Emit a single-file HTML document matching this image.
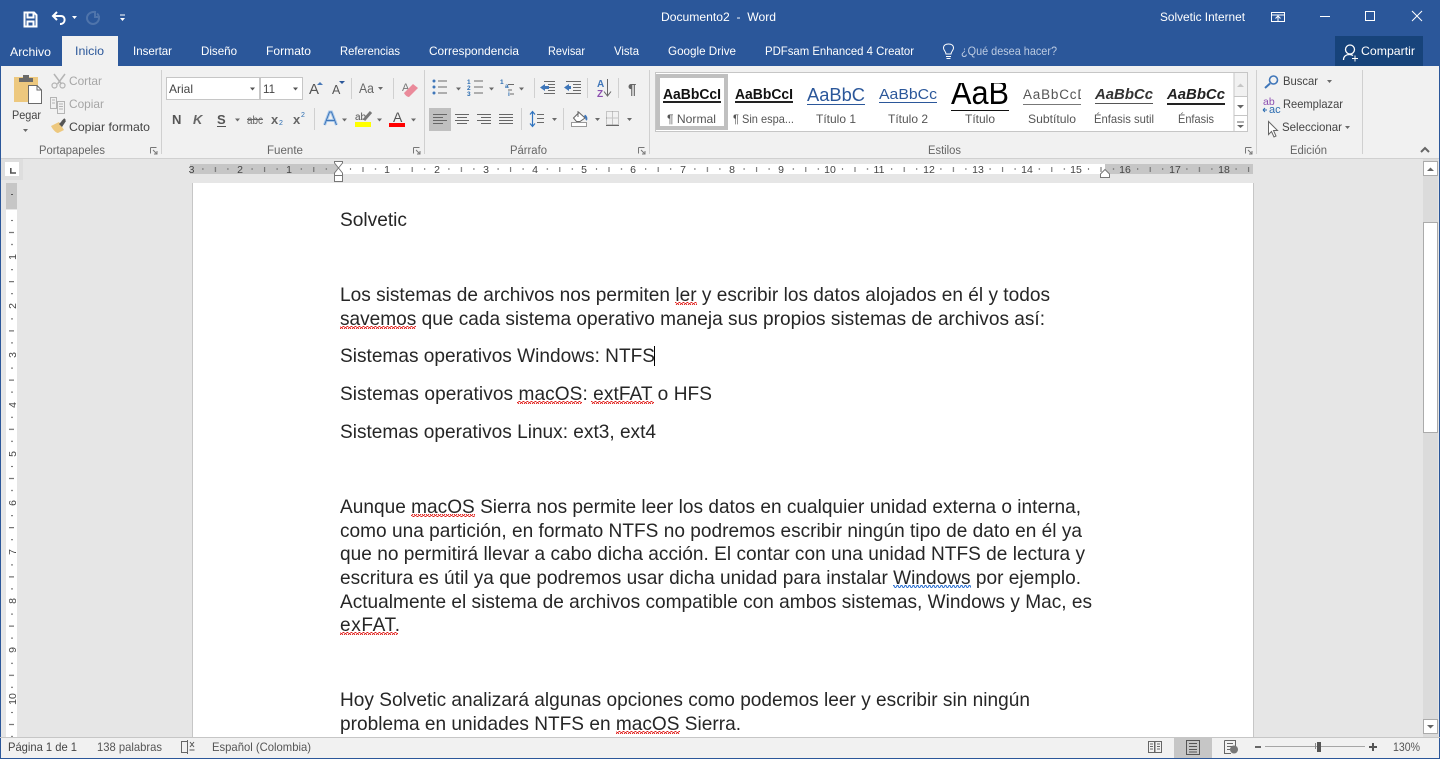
<!DOCTYPE html>
<html lang="es"><head><meta charset="utf-8"><title>Documento2 - Word</title>
<style>
html,body{margin:0;padding:0;width:1440px;height:759px;overflow:hidden;background:#e6e6e6}
svg{display:block}
text{font-family:"Liberation Sans",sans-serif;white-space:pre}
.t{font-size:12px;fill:#fff}
.r{font-size:12px;fill:#444}
.d{font-size:12px;fill:#a6a6a6}
.g{font-size:11.5px;fill:#666}
.s{font-size:12px;fill:#555}
.doc{font-size:19.07px;fill:#262626}
.rn{font-size:10.5px;fill:#444}
.i{fill:none;stroke:#5f5f5f;stroke-width:1}
.l{fill:none;stroke:#6a6a6a;stroke-width:1}
.a{fill:#6a6a6a}
</style></head><body>
<svg width="1440" height="759" viewBox="0 0 1440 759" xmlns="http://www.w3.org/2000/svg">
<defs>
<pattern id="hr" x="338" y="164" width="49.2" height="10" patternUnits="userSpaceOnUse">
<rect x="12" y="4" width="1" height="2" fill="#777"/><rect x="24.5" y="3" width="1" height="5" fill="#666"/><rect x="37" y="4" width="1" height="2" fill="#777"/>
</pattern>
<pattern id="vr" x="6" y="208" width="11" height="49.2" patternUnits="userSpaceOnUse">
<rect x="5" y="12" width="2" height="1" fill="#666"/><rect x="3" y="24" width="5" height="1" fill="#555"/><rect x="5" y="36" width="2" height="1" fill="#666"/>
</pattern>
<pattern id="wr" width="4" height="3" patternUnits="userSpaceOnUse"><path d="M0 2.5L1 .5 2 .5 3 2.5 4 2.5" fill="none" stroke="#e0201c" stroke-width="1"/></pattern>
<pattern id="wb" width="4" height="3" patternUnits="userSpaceOnUse"><path d="M0 2.5L1 .5 2 .5 3 2.5 4 2.5" fill="none" stroke="#2a6fd0" stroke-width="1"/></pattern>
<clipPath id="tc"><rect x="945" y="83" width="70" height="26"/></clipPath>
<clipPath id="sc"><rect x="1023" y="84" width="58" height="24"/></clipPath>
</defs>

<!-- base -->
<rect width="1440" height="759" fill="#e6e6e6"/>
<rect width="1440" height="66" fill="#2b579a"/>
<rect y="66" width="1440" height="92" fill="#f1f1f1"/>
<rect y="158" width="1440" height="1" fill="#d0d0d0"/>
<rect x="1" y="159" width="22" height="21" fill="#dedede"/>
<rect x="62" y="36" width="56" height="30" fill="#f1f1f1"/>
<rect x="1335" y="36" width="88" height="30" fill="#17437a"/>
<rect x="0" y="66" width="1" height="693" fill="#2b579a"/>
<rect x="1439" y="66" width="1" height="693" fill="#2b579a"/>

<!-- title bar icons -->
<path d="M24.500 12.500H34L36.500 15V26.500H24.500Z M27.500 12.500V17.500H33.500V12.500 M27.500 26.500V21.500H33.500V26.500" fill="none" stroke="#fff" stroke-width="2"/>
<path d="M57 12L53 16 57 20" fill="none" stroke="#fff" stroke-width="2"/><path d="M53 16H61C66 16 66 24 60 24" fill="none" stroke="#fff" stroke-width="2"/>
<path d="M72 16h5l-2.500 3z" fill="#fff"/>
<path d="M96 12C90 11 87 15 87 18c0 3.500 3 6 6 6s6-2.500 6-6c0-2-.8-3.500-2-4.500M95 11v6h5" fill="none" stroke="#4f74ab" stroke-width="2"/>
<path d="M120 15h5" fill="none" stroke="#fff" stroke-width="1"/><path d="M120 18h5l-2.500 3z" fill="#fff"/>
<text class="t" x="661" y="21" textLength="115" lengthAdjust="spacingAndGlyphs">Documento2  -  Word</text>
<text class="t" x="1160" y="21" textLength="85" lengthAdjust="spacingAndGlyphs">Solvetic Internet</text>
<path d="M1271.500 12.500H1284.500V21.500H1271.500ZM1271.500 15H1284.500M1278 21V16.500M1275.500 18.500L1278 16 1280.500 18.500" fill="none" stroke="#fff"/>
<rect x="1320" y="16" width="10" height="1" fill="#fff"/>
<rect x="1365.500" y="11.500" width="9" height="9" fill="none" stroke="#fff"/>
<path d="M1412 11L1422 21M1422 11L1412 21" stroke="#fff" fill="none"/>

<!-- tabs -->
<text class="t" x="10" y="56" textLength="41" lengthAdjust="spacingAndGlyphs">Archivo</text>
<text class="t" x="75" y="55" textLength="29" lengthAdjust="spacingAndGlyphs" style="fill:#2b579a">Inicio</text>
<text class="t" x="133" y="55" textLength="39" lengthAdjust="spacingAndGlyphs">Insertar</text>
<text class="t" x="201" y="55" textLength="36" lengthAdjust="spacingAndGlyphs">Diseño</text>
<text class="t" x="266" y="55" textLength="45" lengthAdjust="spacingAndGlyphs">Formato</text>
<text class="t" x="340" y="55" textLength="60" lengthAdjust="spacingAndGlyphs">Referencias</text>
<text class="t" x="429" y="55" textLength="90" lengthAdjust="spacingAndGlyphs">Correspondencia</text>
<text class="t" x="548" y="55" textLength="37" lengthAdjust="spacingAndGlyphs">Revisar</text>
<text class="t" x="614" y="55" textLength="25" lengthAdjust="spacingAndGlyphs">Vista</text>
<text class="t" x="668" y="55" textLength="68" lengthAdjust="spacingAndGlyphs">Google Drive</text>
<text class="t" x="765" y="55" textLength="149" lengthAdjust="spacingAndGlyphs">PDFsam Enhanced 4 Creator</text>
<path d="M946 56.500h5M946.500 58.500h4M946 54C946 51.500 943.500 50.500 943.500 48C943.500 45.500 945.500 44 948.500 44C951.500 44 953.500 45.500 953.500 48C953.500 50.500 951 51.500 951 54Z" fill="none" stroke="#fff" stroke-width="1"/>
<text class="t" x="961" y="55" textLength="96" lengthAdjust="spacingAndGlyphs" style="fill:#bccbe2">¿Qué desea hacer?</text>
<circle cx="1350" cy="49.500" r="4.500" fill="none" stroke="#fff" stroke-width="1.300"/>
<path d="M1343.500 60C1343.500 56 1346.500 54.500 1349.500 54.500C1351 54.500 1352 54.800 1353 55.500" fill="none" stroke="#fff" stroke-width="1.300"/>
<path d="M1352 58.500h6M1355 55.500v6" stroke="#fff"/>
<text class="t" x="1361" y="55" textLength="54" lengthAdjust="spacingAndGlyphs">Compartir</text>

<!-- separators -->
<g fill="#d0d0d0">
<rect x="161" y="70" width="1" height="84"/><rect x="424" y="70" width="1" height="84"/><rect x="649" y="70" width="1" height="84"/><rect x="1256" y="70" width="1" height="84"/><rect x="1362" y="70" width="1" height="84"/>
<rect x="351" y="78" width="1" height="21"/><rect x="393" y="78" width="1" height="21"/><rect x="314" y="108" width="1" height="22"/>
<rect x="534" y="78" width="1" height="20"/><rect x="587" y="78" width="1" height="20"/><rect x="618" y="78" width="1" height="20"/>
<rect x="521" y="108" width="1" height="22"/><rect x="563" y="108" width="1" height="22"/>
</g>

<!-- clipboard -->
<rect x="14" y="77" width="24" height="25" fill="#edc87e"/>
<path d="M19 82V78H23V75H29V78H33V82Z" fill="#6a6a6a"/>
<path d="M28.500 85.500H37L41.500 90V103.500H28.500Z" fill="#fff" stroke="#6a6a6a"/><path d="M37 85.500V90H41.500" fill="none" stroke="#6a6a6a"/>
<text class="r" x="12" y="119" textLength="29" lengthAdjust="spacingAndGlyphs">Pegar</text>
<path d="M23 129h5l-2.500 3z" class="a"/>
<path d="M54 74L61.500 84M65 74L57.500 84" stroke="#b4b4b4" stroke-width="1.500" fill="none"/>
<circle cx="54.500" cy="85.500" r="2.500" fill="none" stroke="#b4b4b4" stroke-width="1.200"/><circle cx="62.500" cy="85.500" r="2.500" fill="none" stroke="#b4b4b4" stroke-width="1.200"/>
<text class="d" x="69" y="85" textLength="33" lengthAdjust="spacingAndGlyphs">Cortar</text>
<path d="M50.500 97.500H56.500V108.500H50.500ZM57.500 101.500H64.500V113.500H57.500ZM59 104h4M59 106.500h4M59 109h4M52 100h3M52 103h3" fill="none" stroke="#b4b4b4"/>
<text class="d" x="69" y="108" textLength="35" lengthAdjust="spacingAndGlyphs">Copiar</text>
<path d="M51 126L59 122 64 130 58 133C56 133 53 130 51 126Z" fill="#edc87e"/>
<path d="M59 124L64 119 66 121 62 127Z" fill="#555"/><path d="M62 122L65 119" stroke="#555" stroke-width="2"/>
<text class="r" x="69" y="131" textLength="81" lengthAdjust="spacingAndGlyphs">Copiar formato</text>
<text class="g" x="39" y="154" textLength="66" lengthAdjust="spacingAndGlyphs">Portapapeles</text>
<path id="dl" d="M150.500 147.500H156.500M150.500 147.500V153.500M153 150L157 154M157 151V154H154" fill="none" stroke="#777"/>

<!-- font -->
<rect x="166.500" y="77.500" width="93" height="22" fill="#fff" stroke="#c6c6c6"/>
<rect x="260.500" y="77.500" width="42" height="22" fill="#fff" stroke="#c6c6c6"/>
<text class="r" x="169" y="93" textLength="24" lengthAdjust="spacingAndGlyphs">Arial</text>
<text class="r" x="263" y="93" textLength="12" lengthAdjust="spacingAndGlyphs">11</text>
<path d="M250 87.500h5l-2.500 3zM293 87.500h5l-2.500 3z" fill="#555"/>
<text x="309" y="94" style="font-size:15px;fill:#555">A</text><path d="M317 85h6l-3-3z" fill="#4a7ab8"/>
<text x="332" y="94" style="font-size:12.500px;fill:#555">A</text><path d="M339 81h6l-3 3z" fill="#2b579a"/>
<text x="359" y="93" textLength="15" lengthAdjust="spacingAndGlyphs" style="font-size:14px;fill:#666">Aa</text>
<path d="M378 87h5l-2.500 3z" class="a"/>
<text x="402" y="91" style="font-size:11px;fill:#777">A</text>
<path d="M404 93L413 84 418 88 409 97C407 97 405 95 404 93Z" fill="#ea8a9a"/>
<text x="172" y="124" style="font-size:13px;font-weight:bold;fill:#555">N</text>
<text x="193" y="124" style="font-size:13px;font-weight:bold;font-style:italic;fill:#666">K</text>
<text x="217" y="124" style="font-size:13px;font-weight:bold;fill:#555">S</text><rect x="217" y="126" width="9" height="1" fill="#555"/>
<path d="M235 118.500h5l-2.500 3z" class="a"/>
<text x="247" y="124" textLength="16" lengthAdjust="spacingAndGlyphs" style="font-size:12px;fill:#666">abc</text><rect x="247" y="119" width="16" height="1" fill="#666"/>
<text x="271" y="124" style="font-size:13px;font-weight:bold;fill:#666">x</text><text x="279" y="125" style="font-size:7px;fill:#2b6cb0">2</text>
<text x="293" y="124" style="font-size:13px;font-weight:bold;fill:#666">x</text><text x="301" y="117" style="font-size:7px;fill:#2b6cb0">2</text>
<path d="M324.500 125L329.500 112H331.500L336.500 125M326.500 120.500H334.500" fill="none" stroke="#a9c8ea" stroke-width="3"/>
<path d="M324.500 125L329.500 112H331.500L336.500 125M326.500 120.500H334.500" fill="none" stroke="#3f76b9" stroke-width="1"/>
<path d="M342 118.500h5l-2.500 3z" class="a"/>
<text x="355" y="120" style="font-size:10px;fill:#555">ab</text>
<path d="M364 120L371 112" stroke="#777" stroke-width="3"/>
<rect x="355" y="122" width="16" height="5" fill="#ffff00"/>
<path d="M377 118.500h5l-2.500 3z" class="a"/>
<text x="393" y="122" style="font-size:14px;fill:#555">A</text>
<rect x="389" y="123" width="16" height="4" fill="#ff0000"/>
<path d="M411 118.500h5l-2.500 3z" class="a"/>
<text class="g" x="267" y="154" textLength="36" lengthAdjust="spacingAndGlyphs">Fuente</text>
<use href="#dl" x="263"/>

<!-- paragraph -->
<rect x="429" y="108" width="22" height="23" fill="#c0c0c0"/>
<g fill="#3f76b9">
<circle cx="434" cy="81" r="1.500"/><circle cx="434" cy="87" r="1.500"/><circle cx="434" cy="93" r="1.500"/>
</g>
<path d="M438 81h9M438 87h9M438 93h9M474 81h9M474 87h9M474 93h9M508 84.500h6M508 90h4M510 94h4" class="l"/>
<path d="M456 87.500h5l-2.500 3zM489 87.500h5l-2.500 3zM519 87.500h5l-2.500 3z" class="a"/>
<text x="467" y="84" style="font-size:6.500px;fill:#2b6cb0;font-weight:bold">1</text><text x="467" y="90" style="font-size:6.500px;fill:#2b6cb0;font-weight:bold">2</text><text x="467" y="96" style="font-size:6.500px;fill:#2b6cb0;font-weight:bold">3</text>
<text x="500" y="84" style="font-size:6.500px;fill:#2b6cb0;font-weight:bold">1</text><text x="505" y="88" style="font-size:6.500px;fill:#2b6cb0;font-weight:bold">a</text><text x="508" y="96" style="font-size:6.500px;fill:#2b6cb0;font-weight:bold">i</text>
<path d="M544 81.500h11M548 84.500h7M548 87.500h7M548 90.500h7M544 93.500h11M566 81.500h15M573 84.500h8M573 87.500h8M573 90.500h8M566 93.500h15" class="l"/>
<path d="M540 87.500L545 84V86H549V89H545V91Z" fill="#3f76b9"/>
<path d="M571 87.500L566 84V86H564V89H566V91Z" transform="matrix(-1 0 0 1 1135 0)" fill="#3f76b9"/>
<text x="597" y="87" style="font-size:10px;font-weight:bold;fill:#3f76b9">A</text><text x="597" y="97" style="font-size:10px;font-weight:bold;fill:#8c4fb0">Z</text>
<path d="M607.500 79V95M604 91.500L607.500 96 611 91.500" fill="none" stroke="#666"/>
<text x="628" y="94" style="font-size:15px;font-weight:bold;fill:#666">¶</text>
<path d="M433 114.500h14M433 117.500h10M433 120.500h14M433 123.500h10M455 114.500h14M457 117.500h10M455 120.500h14M457 123.500h10M477 114.500h14M481 117.500h10M477 120.500h14M481 123.500h10M499 114.500h14M499 117.500h14M499 120.500h14M499 123.500h14" fill="none" stroke="#666"/>
<path d="M532.500 112V126M530 114.500L532.500 111.500 535 114.500M530 123.500L532.500 126.500 535 123.500" fill="none" stroke="#2f73bf" stroke-width="1.200"/>
<path d="M537 114.500h7M537 118.500h7M537 122.500h7" class="l"/>
<path d="M552 118h5l-2.500 3zM595 118h5l-2.500 3zM627 118h5l-2.500 3z" class="a"/>
<path d="M573.500 118L579 112.500 585 118 580 121.500H576.500Z" fill="#fff" stroke="#666"/><path d="M578 111V117" stroke="#666" fill="none"/><path d="M584.500 115.500C587 117 586.500 119.500 586 120" stroke="#3f76b9" stroke-width="2" fill="none"/>
<rect x="571.500" y="122.500" width="15" height="4" fill="#fff" stroke="#999"/>
<path d="M606.500 111.500H618.500V124.500H606.500ZM606.500 118H618.500M612.500 111.500V124.500" fill="none" stroke="#999" stroke-dasharray="1 1"/>
<rect x="606" y="125" width="13" height="1" fill="#666"/>
<text class="g" x="510" y="154" textLength="37" lengthAdjust="spacingAndGlyphs">Párrafo</text>
<use href="#dl" x="488"/>

<!-- styles -->
<rect x="655.500" y="72.500" width="592" height="59" fill="#fff" stroke="#c6c6c6"/>
<rect x="658" y="76" width="68" height="52" fill="#fff" stroke="#c0c0c0" stroke-width="4"/>
<text x="663" y="99" textLength="58" lengthAdjust="spacingAndGlyphs" style="font-size:14.500px;font-weight:bold;fill:#111">AaBbCcI</text><rect x="663" y="101" width="58" height="2" fill="#222"/>
<text x="735" y="99" textLength="58" lengthAdjust="spacingAndGlyphs" style="font-size:14.500px;font-weight:bold;fill:#111">AaBbCcI</text><rect x="735" y="101" width="58" height="2" fill="#222"/>
<text x="807" y="101" textLength="58" lengthAdjust="spacingAndGlyphs" style="font-size:18.500px;fill:#2b579a">AaBbC</text><rect x="807" y="104" width="58" height="1" fill="#2b579a"/>
<text x="879" y="99" textLength="58" lengthAdjust="spacingAndGlyphs" style="font-size:14.500px;fill:#2b579a">AaBbCc</text><rect x="879" y="102" width="58" height="1" fill="#2b579a"/>
<g clip-path="url(#tc)"><text x="951" y="104" textLength="58" lengthAdjust="spacingAndGlyphs" style="font-size:33px;fill:#000">AaB</text></g><rect x="951" y="110" width="58" height="1" fill="#111"/>
<g clip-path="url(#sc)"><text x="1023" y="99" style="font-size:13.500px;letter-spacing:.8px;fill:#555">AaBbCcD</text></g><rect x="1023" y="104" width="58" height="1" fill="#777"/>
<text x="1095" y="99" textLength="58" lengthAdjust="spacingAndGlyphs" style="font-size:14.500px;font-weight:bold;font-style:italic;fill:#333">AaBbCc</text><rect x="1095" y="103" width="58" height="1" fill="#555"/>
<text x="1167" y="99" textLength="58" lengthAdjust="spacingAndGlyphs" style="font-size:14.500px;font-weight:bold;font-style:italic;fill:#222">AaBbCc</text><rect x="1167" y="103" width="58" height="2" fill="#222"/>
<text class="s" x="667" y="123" textLength="49" lengthAdjust="spacingAndGlyphs">¶ Normal</text>
<text class="s" x="733" y="123" textLength="61" lengthAdjust="spacingAndGlyphs">¶ Sin espa...</text>
<text class="s" x="816" y="123" textLength="40" lengthAdjust="spacingAndGlyphs">Título 1</text>
<text class="s" x="888" y="123" textLength="40" lengthAdjust="spacingAndGlyphs">Título 2</text>
<text class="s" x="965" y="123" textLength="30" lengthAdjust="spacingAndGlyphs">Título</text>
<text class="s" x="1028" y="123" textLength="48" lengthAdjust="spacingAndGlyphs">Subtítulo</text>
<text class="s" x="1094" y="123" textLength="60" lengthAdjust="spacingAndGlyphs">Énfasis sutil</text>
<text class="s" x="1178" y="123" textLength="36" lengthAdjust="spacingAndGlyphs">Énfasis</text>
<rect x="1234" y="73" width="13" height="23" fill="#f1f1f1"/>
<path d="M1234 72.500V131M1234 96.500H1248M1234 115.500H1248" stroke="#c6c6c6" fill="none"/>
<path d="M1237 87h7l-3.500-3.500z" fill="#c6c6c6"/><path d="M1237 105h7l-3.500 3.500z" fill="#666"/>
<path d="M1237 122h7" stroke="#666"/><path d="M1237 125h7l-3.500 3z" fill="#666"/>
<text class="g" x="928" y="154" textLength="33" lengthAdjust="spacingAndGlyphs">Estilos</text>
<use href="#dl" x="1095"/>

<!-- editing -->
<circle cx="1273.500" cy="80" r="4" fill="none" stroke="#3f76b9" stroke-width="1.600"/><path d="M1270 83.500L1265 88" stroke="#3f76b9" stroke-width="2"/>
<text class="r" x="1283" y="85" textLength="35" lengthAdjust="spacingAndGlyphs">Buscar</text>
<path d="M1327 80h5l-2.500 3z" class="a"/>
<text x="1263" y="105" style="font-size:10.500px;fill:#8c4fb0">ab</text>
<text x="1269" y="113" style="font-size:11px;fill:#2b6cb0">ac</text>
<path d="M1263 110h4M1263 110l2-2M1263 110l2 2" stroke="#2b6cb0" fill="none"/>
<text class="r" x="1283" y="108" textLength="60" lengthAdjust="spacingAndGlyphs">Reemplazar</text>
<path d="M1268.500 121.500V134.500L1271.500 131.500 1274 137 1276 136 1273.500 130.500H1277.500Z" fill="#fff" stroke="#666"/>
<text class="r" x="1282" y="131" textLength="60" lengthAdjust="spacingAndGlyphs">Seleccionar</text>
<path d="M1345 126h5l-2.500 3z" class="a"/>
<text class="g" x="1290" y="154" textLength="37" lengthAdjust="spacingAndGlyphs">Edición</text>
<path d="M1421 152L1425 148 1429 152" fill="none" stroke="#666" stroke-width="2"/>

<!-- horizontal ruler -->
<rect x="5" y="162" width="14" height="14" fill="#fff"/>
<path d="M10.800 168V173H16" fill="none" stroke="#555" stroke-width="1.600"/>
<rect x="190" y="164" width="1063" height="10" fill="#c6c6c6"/>
<rect x="338" y="164" width="767" height="10" fill="#fff"/>
<rect x="190" y="164" width="1063" height="10" fill="url(#hr)"/>
<g class="rn" text-anchor="middle" font-size="10.500" fill="#444" style="font-size:10.500px">
<text x="191.500" y="173">3</text><text x="240" y="173">2</text><text x="289" y="173">1</text>
<text x="387" y="173">1</text><text x="437" y="173">2</text><text x="486" y="173">3</text><text x="535" y="173">4</text><text x="584" y="173">5</text><text x="633" y="173">6</text><text x="683" y="173">7</text><text x="732" y="173">8</text><text x="781" y="173">9</text><text x="830" y="173">10</text><text x="879" y="173">11</text><text x="929" y="173">12</text><text x="978" y="173">13</text><text x="1027" y="173">14</text><text x="1076" y="173">15</text><text x="1125" y="173">16</text><text x="1175" y="173">17</text><text x="1224" y="173">18</text>
</g>
<path d="M334.500 161.500H342.500V163L338.500 168 334.500 163ZM338.500 168L342.500 173V175.500H334.500V173Z" fill="#fff" stroke="#777"/>
<rect x="334.500" y="175.500" width="8" height="6" fill="#fff" stroke="#777"/>
<path d="M1105 169.500L1109.500 174V177.500H1100.500V174Z" fill="#fff" stroke="#777"/>

<!-- vertical ruler -->
<rect x="6" y="183" width="11" height="26" fill="#c6c6c6"/>
<rect x="6" y="210" width="11" height="527" fill="#fff"/>
<rect x="11" y="194" width="2" height="1" fill="#555"/>
<rect x="6" y="208" width="11" height="529" fill="url(#vr)"/>
<g style="font-size:10.500px" fill="#444" text-anchor="middle">
<text transform="translate(16,257) rotate(-90)">1</text><text transform="translate(16,306) rotate(-90)">2</text><text transform="translate(16,355) rotate(-90)">3</text><text transform="translate(16,405) rotate(-90)">4</text><text transform="translate(16,454) rotate(-90)">5</text><text transform="translate(16,503) rotate(-90)">6</text><text transform="translate(16,552) rotate(-90)">7</text><text transform="translate(16,601) rotate(-90)">8</text><text transform="translate(16,650) rotate(-90)">9</text><text transform="translate(16,699) rotate(-90)">10</text>
</g>

<!-- page -->
<rect x="192" y="183" width="1" height="555" fill="#c6c6c6"/>
<rect x="193" y="183" width="1060" height="555" fill="#fff"/>
<rect x="1253" y="183" width="1" height="555" fill="#c6c6c6"/>

<text class="doc" x="340" y="226" textLength="67" lengthAdjust="spacingAndGlyphs">Solvetic</text>
<text class="doc" x="340" y="301" textLength="710" lengthAdjust="spacing">Los sistemas de archivos nos permiten ler y escribir los datos alojados en él y todos</text>
<text class="doc" x="340" y="325" textLength="705" lengthAdjust="spacing">savemos que cada sistema operativo maneja sus propios sistemas de archivos así:</text>
<text class="doc" x="340" y="362" textLength="315" lengthAdjust="spacing">Sistemas operativos Windows: NTFS</text>
<rect x="654" y="346" width="1" height="20" fill="#000"/>
<text class="doc" x="340" y="400" textLength="372" lengthAdjust="spacing">Sistemas operativos macOS: extFAT o HFS</text>
<text class="doc" x="340" y="438" textLength="316" lengthAdjust="spacing">Sistemas operativos Linux: ext3, ext4</text>
<text class="doc" x="340" y="513" textLength="741" lengthAdjust="spacing">Aunque macOS Sierra nos permite leer los datos en cualquier unidad externa o interna,</text>
<text class="doc" x="340" y="537" textLength="742" lengthAdjust="spacing">como una partición, en formato NTFS no podremos escribir ningún tipo de dato en él ya</text>
<text class="doc" x="340" y="560" textLength="745" lengthAdjust="spacing">que no permitirá llevar a cabo dicha acción. El contar con una unidad NTFS de lectura y</text>
<text class="doc" x="340" y="584" textLength="741" lengthAdjust="spacing">escritura es útil ya que podremos usar dicha unidad para instalar Windows por ejemplo.</text>
<text class="doc" x="340" y="608" textLength="752" lengthAdjust="spacing">Actualmente el sistema de archivos compatible con ambos sistemas, Windows y Mac, es</text>
<text class="doc" x="340" y="631" textLength="60" lengthAdjust="spacing">exFAT.</text>
<text class="doc" x="340" y="706" textLength="690" lengthAdjust="spacing">Hoy Solvetic analizará algunas opciones como podemos leer y escribir sin ningún</text>
<text class="doc" x="340" y="730" textLength="401" lengthAdjust="spacing">problema en unidades NTFS en macOS Sierra.</text>
<g>
<rect x="675" y="302" width="22" height="3" fill="url(#wr)"/>
<rect x="340" y="326" width="76" height="3" fill="url(#wr)"/>
<rect x="517" y="401" width="65" height="3" fill="url(#wr)"/>
<rect x="591" y="401" width="63" height="3" fill="url(#wr)"/>
<rect x="411" y="514" width="64" height="3" fill="url(#wr)"/>
<rect x="893" y="585" width="78" height="3" fill="url(#wb)"/>
<rect x="340" y="632" width="58" height="3" fill="url(#wr)"/>
<rect x="616" y="731" width="64" height="3" fill="url(#wr)"/>
</g>

<!-- scrollbar -->
<rect x="1423" y="159" width="15" height="579" fill="#dbdbdb"/>
<rect x="1423.500" y="161.500" width="14" height="14" fill="#fff" stroke="#ababab"/>
<path d="M1427 171h7l-3.500-3.500z" fill="#666"/>
<rect x="1423.500" y="222.500" width="14" height="210" fill="#fff" stroke="#ababab"/>
<rect x="1423.500" y="719.500" width="14" height="14" fill="#fff" stroke="#ababab"/>
<path d="M1427 725h7l-3.500 3.500z" fill="#666"/>

<!-- status bar -->
<rect x="0" y="738" width="1440" height="21" fill="#f1f1f1"/>
<rect x="0" y="737" width="1440" height="1" fill="#c6c6c6"/>
<rect x="0" y="758" width="1440" height="1" fill="#2b579a"/>
<rect x="0" y="738" width="1" height="21" fill="#2b579a"/><rect x="1439" y="738" width="1" height="21" fill="#2b579a"/>
<text class="s" x="8" y="751" textLength="69" lengthAdjust="spacingAndGlyphs" style="fill:#444">Página 1 de 1</text>
<text class="s" x="97" y="751" textLength="65" lengthAdjust="spacingAndGlyphs">138 palabras</text>
<path d="M187.500 741.500H181.500V752.500H187.500M187.500 740V754" fill="none" stroke="#666"/><path d="M190 742L194 747M194 742L190 747M189.500 750h5" stroke="#555" fill="none"/>
<text class="s" x="212" y="751" textLength="99" lengthAdjust="spacingAndGlyphs">Español (Colombia)</text>
<path d="M1148.500 741.500H1154.500V752.500H1148.500ZM1155 741.500H1161.500V752.500H1155ZM1150 744h3M1150 746.500h3M1150 749h3M1157 744h3M1157 746.500h3M1157 749h3" fill="none" stroke="#666"/>
<rect x="1174" y="738" width="38" height="20" fill="#c6c6c6"/>
<path d="M1186.500 740.500H1199.500V754.500H1186.500ZM1189 743.500h8M1189 746.500h8M1189 749.500h8M1189 752h8" fill="none" stroke="#555"/>
<path d="M1224.500 740.500H1235.500V749M1224.500 740.500V753.500H1231M1227 743.500h6M1227 746.500h6M1227 749.500h3" fill="none" stroke="#666"/>
<circle cx="1234" cy="749.500" r="4" fill="#777"/>
<rect x="1255" y="746" width="6" height="2" fill="#666"/>
<rect x="1265" y="746" width="100" height="1" fill="#a6a6a6"/>
<rect x="1315" y="743" width="1" height="6" fill="#888"/>
<rect x="1317" y="742" width="4" height="10" fill="#555"/>
<path d="M1369 747h8M1373 743v8" stroke="#555" stroke-width="2"/>
<text class="s" x="1393" y="751" textLength="27" lengthAdjust="spacingAndGlyphs">130%</text>
</svg>
</body></html>
